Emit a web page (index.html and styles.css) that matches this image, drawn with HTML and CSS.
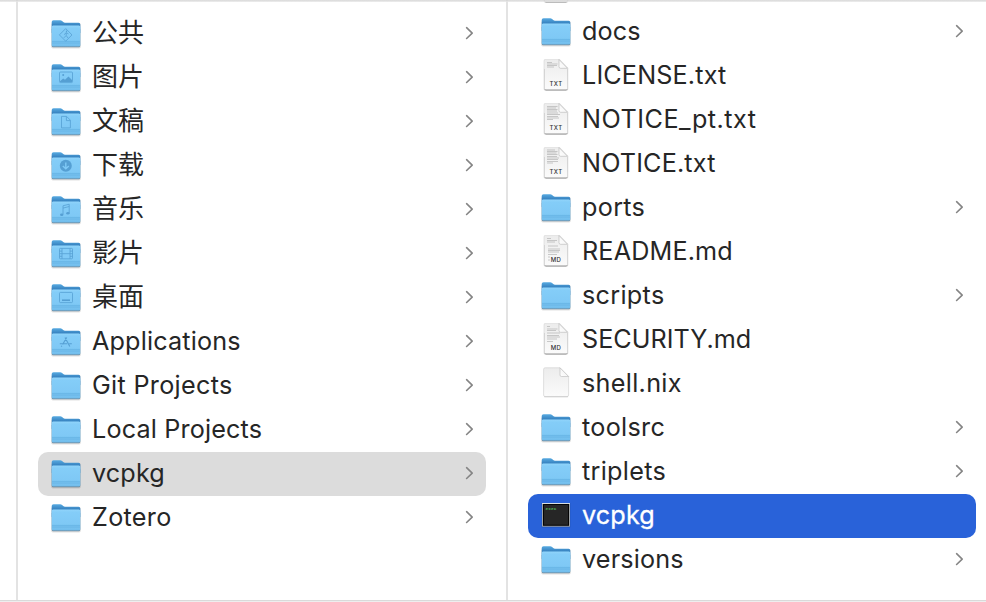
FILE: index.html
```html
<!DOCTYPE html>
<html lang="zh-CN">
<head>
<meta charset="utf-8">
<title>vcpkg</title>
<link rel="stylesheet" href="styles.css">
</head>
<body>
<svg class="defs" aria-hidden="true">
  <defs>
    <linearGradient id="back" x1="0" y1="0" x2="0" y2="1"><stop offset="0" stop-color="#58abe2"/><stop offset=".35" stop-color="#3a86c3"/><stop offset="1" stop-color="#4594cf"/></linearGradient>
    <linearGradient id="front" x1="0" y1="0" x2="0" y2="1"><stop offset="0" stop-color="#91d4fa"/><stop offset=".12" stop-color="#84cdf8"/><stop offset=".75" stop-color="#7ec8f5"/><stop offset="1" stop-color="#70bceb"/></linearGradient>
    <linearGradient id="paper" x1="0" y1="0" x2="0" y2="1"><stop offset="0" stop-color="#ececec"/><stop offset="1" stop-color="#fbfbfb"/></linearGradient>
    <linearGradient id="fold" x1="0" y1="1" x2="1" y2="0"><stop offset="0" stop-color="#fff"/><stop offset="1" stop-color="#eee"/></linearGradient>
  </defs>
  <symbol id="folder" viewBox="0 -2 32 36">
    <rect x="1.2" y="5" width="29.6" height="25.4" rx="1.6" fill="#000" opacity=".12"/>
    <rect x="1.8" y="10" width="28.4" height="19.3" rx="1.4" fill="#4c6980" opacity=".75"/>
    <path d="M1.7 4Q1.7 2.2 3.5 2.2H10.2Q11.3 2.2 12.1 3L13.2 4Q14 4.7 15 4.7H28.6Q30.3 4.7 30.3 6.4V15H1.7Z" fill="url(#back)"/>
    <path d="M1.7 9.1Q1.7 7.6 3.2 7.6H28.8Q30.3 7.6 30.3 9.1V26.9Q30.3 28.4 28.8 28.4H3.2Q1.7 28.4 1.7 26.9Z" fill="url(#front)"/>
    <path d="M2 23.4H30M2 25H30" stroke="#5ba9dc" stroke-width=".6"/>
  </symbol>
  <symbol id="sheet" viewBox="0 -2 32 36">
    <path d="M3.6 1Q3.6-.9 5.3-.9H19.5L28.3 8V29Q28.3 30.7 26.6 30.7H5.3Q3.6 30.7 3.6 29Z" fill="#000" opacity=".13"/>
    <path d="M4.5 9H27.5V28.8Q27.5 30.4 25.9 30.4H6Q4.5 30.4 4.5 28.8Z" fill="#777" opacity=".75"/>
    <path d="M4.5.9Q4.5-.5 5.9-.5H19L27.5 8V28.2Q27.5 29.5 26.1 29.5H5.9Q4.5 29.5 4.5 28.2Z" fill="url(#paper)"/>
    <path d="M19-.5V6.6Q19 8.3 20.7 8.3H27.5Z" fill="url(#fold)" stroke="#b5b5b5" stroke-width=".6" stroke-linejoin="round"/>
  </symbol>
  <symbol id="blank" viewBox="0 -2 32 36">
    <path d="M3.6 1.3Q3.6-.2 5.1-.2H20L28.6 8.5V27Q28.6 28.6 27 28.6H5.1Q3.6 28.6 3.6 27Z" fill="url(#paper)" stroke="#d8d8d8" stroke-width=".8"/>
    <path d="M20-.2V7Q20 8.5 21.5 8.5H28.6Z" fill="url(#fold)" stroke="#b8b8b8" stroke-width=".6" stroke-linejoin="round"/>
    <path d="M4.2 28.8H28" stroke="#bbb" stroke-width=".6"/>
  </symbol>
  <symbol id="chevron" viewBox="0 0 10 14"><path d="M2.6 1.7 8.2 7.1 2.6 12.5" fill="none" stroke="#858585" stroke-width="1.6" stroke-linecap="round" stroke-linejoin="round"/></symbol>
</svg>

<main class="browser">
  <section class="column column-stub"></section>
  <section class="column column-home">
    <div class="row cjk"><svg class="icon"><use href="#folder"/><g class="mark"><path d="M15.7 12.6 22 18.9 15.7 25.2 9.4 18.9Z"/><path d="M14 18.7 16.2 16.7 18.5 17.9M16.2 16.7V19.5L18 22M16 19.7 13.8 21.9"/><circle class="solid" cx="16.5" cy="15.3" r=".7"/></g></svg><span class="label">公共</span><svg class="chevron"><use href="#chevron"/></svg></div>
    <div class="row cjk"><svg class="icon"><use href="#folder"/><g class="mark"><rect x="9.5" y="12" width="13" height="10.6" rx="1"/><path class="solid" d="M10 21.2 13.2 18.4 15 19.8 18.5 16.4 22 20V22H10Z"/><circle class="solid" cx="13.2" cy="15" r="1"/></g></svg><span class="label">图片</span><svg class="chevron"><use href="#chevron"/></svg></div>
    <div class="row cjk"><svg class="icon"><use href="#folder"/><g class="mark"><path d="M11.5 12.4H16.6L20.4 16.2V23.9H11.5ZM16.4 12.6V16.6H20.2"/></g></svg><span class="label">文稿</span><svg class="chevron"><use href="#chevron"/></svg></div>
    <div class="row cjk"><svg class="icon"><use href="#folder"/><g class="mark"><circle class="solid" cx="15.8" cy="17.7" r="6"/><path class="light" d="M15.8 14.5V20.5M12.8 17.9 15.8 20.8 18.8 17.9"/></g></svg><span class="label">下载</span><svg class="chevron"><use href="#chevron"/></svg></div>
    <div class="row cjk"><svg class="icon"><use href="#folder"/><g class="mark"><path d="M13 22.4V13.8L19.2 12.2V21M13 16.1 19.2 14.5"/><ellipse class="solid" cx="11.7" cy="22.7" rx="1.7" ry="1.3"/><ellipse class="solid" cx="17.9" cy="21.2" rx="1.7" ry="1.3"/></g></svg><span class="label">音乐</span><svg class="chevron"><use href="#chevron"/></svg></div>
    <div class="row cjk"><svg class="icon"><use href="#folder"/><g class="mark"><rect x="9.5" y="12.4" width="13" height="10.4" rx=".8"/><path d="M12 12.6V22.8M20 12.6V22.8M12 17.7H20M9.5 15.1H12M9.5 17.7H12M9.5 20.3H12M20 15.1H22.5M20 17.7H22.5M20 20.3H22.5"/></g></svg><span class="label">影片</span><svg class="chevron"><use href="#chevron"/></svg></div>
    <div class="row cjk"><svg class="icon"><use href="#folder"/><g class="mark"><rect x="9.5" y="12.4" width="13" height="10.2" rx="1"/><path class="thick" d="M12 20.2H20"/></g></svg><span class="label">桌面</span><svg class="chevron"><use href="#chevron"/></svg></div>
    <div class="row"><svg class="icon"><use href="#folder"/><g class="mark"><path class="bold" d="M15 13.4 19.8 22.4M16.7 13.4 12.6 20.6M9.8 19.7H17.2M19.2 19.7H21.8M11.8 21.8 11.3 22.6"/></g></svg><span class="label">Applications</span><svg class="chevron"><use href="#chevron"/></svg></div>
    <div class="row"><svg class="icon"><use href="#folder"/></svg><span class="label wide">Git Projects</span><svg class="chevron"><use href="#chevron"/></svg></div>
    <div class="row"><svg class="icon"><use href="#folder"/></svg><span class="label">Local Projects</span><svg class="chevron"><use href="#chevron"/></svg></div>
    <div class="row row-open"><svg class="icon"><use href="#folder"/></svg><span class="label">vcpkg</span><svg class="chevron"><use href="#chevron"/></svg></div>
    <div class="row"><svg class="icon"><use href="#folder"/></svg><span class="label wide">Zotero</span><svg class="chevron"><use href="#chevron"/></svg></div>
  </section>
  <section class="column column-files">
    <div class="row"><svg class="icon"><use href="#sheet"/></svg></div>
    <div class="row"><svg class="icon"><use href="#folder"/></svg><span class="label">docs</span><svg class="chevron"><use href="#chevron"/></svg></div>
    <div class="row"><svg class="icon"><use href="#sheet"/><path class="lines" d="M7 2.5H12M7 4H17.5M7 5.5H17M7 7H14"/><text class="kind" x="16" y="25.9">TXT</text></svg><span class="label">LICENSE.txt</span></div>
    <div class="row"><svg class="icon"><use href="#sheet"/><path class="lines" d="M7 2.5H17.5M7 4H16M7 5.5H17.5M7 7H17M7 9H18M7 10.5H20M7 12.5H18M7 14H19M7 15.5H13"/><text class="kind" x="16" y="25.9">TXT</text></svg><span class="label widest">NOTICE_pt.txt</span></div>
    <div class="row"><svg class="icon"><use href="#sheet"/><path class="lines" d="M7 2H15M7 3.5H17.5M7 5H16.5M7 6.5H17.5M7 8.5H17M7 10H19M7 11.5H18M7 13.5H18M7 15H13"/><text class="kind" x="16" y="25.9">TXT</text></svg><span class="label">NOTICE.txt</span></div>
    <div class="row"><svg class="icon"><use href="#folder"/></svg><span class="label wide">ports</span><svg class="chevron"><use href="#chevron"/></svg></div>
    <div class="row"><svg class="icon"><use href="#sheet"/><path class="lines" d="M7 2.5H11M7 4.5H17M7 6H15M8 10H18M8 13H20M8 14.5H20M8 16H19M8 18.5H17M8 21H10M8 24H10"/><text class="kind" x="16" y="25.9">MD</text></svg><span class="label">README.md</span></div>
    <div class="row"><svg class="icon"><use href="#folder"/></svg><span class="label wide">scripts</span><svg class="chevron"><use href="#chevron"/></svg></div>
    <div class="row"><svg class="icon"><use href="#sheet"/><path class="lines" d="M7 2.5H10M7 5H17.5M7 6.5H16M7 9H20M7 11.5H19M7 13H20M7 15H17M7 17.5H13"/><text class="kind" x="16" y="25.9">MD</text></svg><span class="label tight">SECURITY.md</span></div>
    <div class="row"><svg class="icon"><use href="#blank"/></svg><span class="label wide">shell.nix</span></div>
    <div class="row"><svg class="icon"><use href="#folder"/></svg><span class="label wide">toolsrc</span><svg class="chevron"><use href="#chevron"/></svg></div>
    <div class="row"><svg class="icon"><use href="#folder"/></svg><span class="label wide">triplets</span><svg class="chevron"><use href="#chevron"/></svg></div>
    <div class="row row-selected"><svg class="icon" viewBox="0 -2 32 36"><rect x="1.8" y="3" width="28.4" height="24.3" fill="#13356f" opacity=".5"/><rect x="2" y="3" width="28" height="23.7" fill="#9da2a5"/><rect x="2" y="3" width="28" height="1" fill="#d6dde0"/><rect x="3" y="4" width="26" height="21.8" fill="#050505"/><rect x="4" y="5" width="24" height="19.8" fill="#262626"/><text class="exec" x="5.6" y="9.8">exec</text></svg><span class="label">vcpkg</span></div>
    <div class="row"><svg class="icon"><use href="#folder"/></svg><span class="label">versions</span><svg class="chevron"><use href="#chevron"/></svg></div>
  </section>
</main>
</body>
</html>
```
FILE: styles.css
```css
* { box-sizing: border-box; }

body {
  margin: 0;
  background: #fff;
  color: #262626;
  font-family: Inter, "Noto Sans CJK SC", sans-serif;
  font-size: 25.2px;
}

.defs { position: absolute; width: 0; height: 0; }

.browser {
  position: relative;
  display: grid;
  grid-template-columns: 18px 490px 478px;
  width: 986px;
  height: 602px;
  overflow: hidden;
}

/* Frame rules drawn above the scrolled rows */
.browser::before,
.browser::after {
  content: "";
  position: absolute;
  left: 0;
  right: 0;
  height: 2px;
}
.browser::before { top: 0; background: linear-gradient(#d5d5d5 50%, #e3e3e3 50%); opacity: .8; }
.browser::after { bottom: 0; background: linear-gradient(#dadada 50%, #eee 50%); }

.column { height: 602px; border-right: 2px solid #e3e3e3; overflow: hidden; }
.column-home { padding: 12px 20px 0; }
.column-files { padding: 0 10px 0 20px; border-right: 0; }
.column-files .row:first-child { margin-top: -34px; }

.row {
  display: flex;
  align-items: center;
  height: 44px;
  padding: 0 12px;
  border-radius: 10px;
}
.row-open { background: #dcdcdc; }
.row-selected { background: #2962d9; color: #fff; }
.row-selected .label { -webkit-text-stroke: .3px #fff; }

.icon { flex: none; width: 32px; height: 36px; overflow: visible; }
.icon .lines, .icon .kind { transform: translateY(2px); }

.label {
  flex: 1;
  margin-left: 10px;
  height: 44px;
  line-height: 42px;
  letter-spacing: .15px;
  white-space: nowrap;
}
.wide { letter-spacing: .3px; }
.widest { letter-spacing: .5px; }
.tight { letter-spacing: 0; }
.cjk .label { font-family: "Noto Sans CJK SC", sans-serif; font-size: 26px; line-height: 38px; letter-spacing: 0; }

.chevron { flex: none; width: 10px; height: 14px; margin-bottom: 2px; }

.mark { fill: none; stroke: #559fd3; stroke-width: .8; }
.mark .solid { fill: #559fd3; stroke: none; }
.mark .light { stroke: #7fc9f6; stroke-width: 1.4; }
.mark .thick { stroke-width: 1.6; }
.mark .bold { stroke-width: 1.1; }

.lines { stroke: #aaa; stroke-width: .6; fill: none; }
.kind { font: 500 6px Inter, sans-serif; letter-spacing: .4px; text-anchor: middle; fill: #333; }
.exec { font: 700 4.4px "Liberation Mono", monospace; letter-spacing: .1px; fill: #52b95b; }
```
